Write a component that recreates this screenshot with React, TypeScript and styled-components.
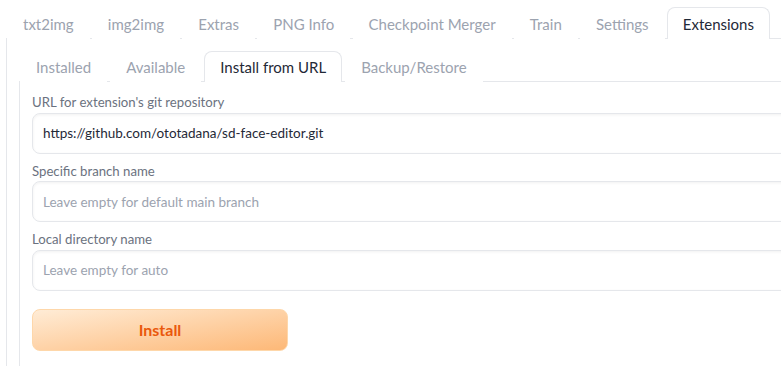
import styled, { createGlobalStyle } from 'styled-components';

const Global = createGlobalStyle`
  html, body { margin: 0; padding: 0; background: #fff; overflow: hidden; }
  body { font-family: Lato, "Noto Sans", sans-serif; }
  * { box-sizing: border-box; }
`;

const Page = styled.div`
  width: 840px;
  padding: 7px 0 0 6px;
`;

const TabNav = styled.div`
  display: flex;
  border-bottom: 1px solid #e5e7eb;
  padding-left: 1px;
`;

const Tab = styled.div<{ $active?: boolean; $h: number; $gap?: number }>`
  display: flex;
  align-items: center;
  height: ${p => p.$h}px;
  padding: 0 15px;
  margin-right: ${p => p.$gap ?? 3}px;
  margin-bottom: -1px;
  border: 1px solid ${p => (p.$active ? '#e5e7eb' : 'transparent')};
  border-bottom: none;
  border-radius: 8px 8px 0 0;
  background: #fff;
  font-size: 15px;
  color: ${p => (p.$active ? '#1f2937' : '#9ca3af')};
  white-space: nowrap;
`;

const OuterPanel = styled.div`
  border: 1px solid #e5e7eb;
  border-top: none;
  padding: 12px 0 0 12px;
  min-height: 330px;
`;

const InnerPanel = styled.div`
  border: 1px solid #e5e7eb;
  border-top: none;
  padding: 10px 0 20px 12px;
`;

const Field = styled.div`
  display: flex;
  flex-direction: column;
  margin-bottom: 7px;
`;

const Label = styled.label`
  font-size: 13.2px;
  line-height: 20.5px;
  color: #6b7280;
`;

const Input = styled.input`
  height: 41px;
  width: 100%;
  padding: 0 10px;
  border: 1px solid #e5e7eb;
  border-radius: 8px;
  box-shadow: inset 0 1px 3px rgba(0, 0, 0, 0.06);
  font-family: inherit;
  font-size: 13.5px;
  color: #1f2937;
  outline: none;
  &::placeholder { color: #9ca3af; }
`;

const InstallButton = styled.button`
  margin-top: 11px;
  width: 256px;
  height: 42px;
  border: 1px solid #fed7aa;
  border-radius: 8px;
  background: linear-gradient(to bottom right, #ffecd6, #fdb877);
  font-family: inherit;
  font-size: 16px;
  font-weight: 700;
  color: #ea580c;
`;

const topTabs = ['txt2img', 'img2img', 'Extras', 'PNG Info', 'Checkpoint Merger', 'Train', 'Settings', 'Extensions'];
const subTabs = ['Installed', 'Available', 'Install from URL', 'Backup/Restore'];

export default function App() {
  return (
    <Page>
      <Global />
      <TabNav>
        {topTabs.map(t => (
          <Tab key={t} $h={32} $gap={2.2} $active={t === 'Extensions'}>{t}</Tab>
        ))}
      </TabNav>
      <OuterPanel>
        <TabNav>
          {subTabs.map(t => (
            <Tab key={t} $h={31} $active={t === 'Install from URL'}>{t}</Tab>
          ))}
        </TabNav>
        <InnerPanel>
          <Field>
            <Label>URL for extension's git repository</Label>
            <Input defaultValue="https://github.com/ototadana/sd-face-editor.git" />
          </Field>
          <Field>
            <Label>Specific branch name</Label>
            <Input placeholder="Leave empty for default main branch" />
          </Field>
          <Field>
            <Label>Local directory name</Label>
            <Input placeholder="Leave empty for auto" />
          </Field>
          <InstallButton>Install</InstallButton>
        </InnerPanel>
      </OuterPanel>
    </Page>
  );
}
